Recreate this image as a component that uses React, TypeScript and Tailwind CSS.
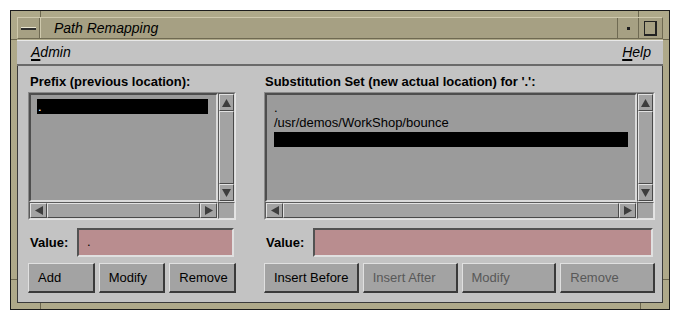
import React from 'react'

const raised = 'bg-[#a3a3a3] border border-t-[#e2e2e2] border-l-[#e2e2e2] border-b-[#4a4a4a] border-r-[#4a4a4a]'

function Arrow({ dir }: { dir: 'up' | 'down' | 'left' | 'right' }) {
  const pts = {
    up: '4.5,0 9,8 0,8',
    down: '0,0 9,0 4.5,8',
    left: '8,0 8,9 0,4.5',
    right: '0,0 8,4.5 0,9',
  }[dir]
  const vertical = dir === 'up' || dir === 'down'
  return (
    <svg width={vertical ? 9 : 8} height={vertical ? 8 : 9} viewBox={vertical ? '0 0 9 8' : '0 0 8 9'}>
      <polygon points={pts} fill="#3d3d3d" />
    </svg>
  )
}

function ArrowBtn({ dir }: { dir: 'up' | 'down' | 'left' | 'right' }) {
  const vertical = dir === 'up' || dir === 'down'
  return (
    <div className={`${raised} flex items-center justify-center shrink-0 ${vertical ? 'h-[17px]' : 'w-[17px]'}`}>
      <Arrow dir={dir} />
    </div>
  )
}

function VScroll() {
  return (
    <div className="flex flex-col bg-[#9b9b9b] border border-t-[#5a5a5a] border-l-[#5a5a5a] border-b-[#dcdcdc] border-r-[#dcdcdc]">
      <ArrowBtn dir="up" />
      <div className={`${raised} flex-1`} />
      <ArrowBtn dir="down" />
    </div>
  )
}

function HScroll() {
  return (
    <div className="flex bg-[#9b9b9b] border border-t-[#5a5a5a] border-l-[#5a5a5a] border-b-[#dcdcdc] border-r-[#dcdcdc]">
      <ArrowBtn dir="left" />
      <div className={`${raised} flex-1`} />
      <ArrowBtn dir="right" />
    </div>
  )
}

function ListBox({ children, pad }: { children: React.ReactNode; pad: string }) {
  return (
    <div className="h-[128px] grid grid-cols-[1fr_17px] grid-rows-[1fr_17px] border border-t-[#8a8a8a] border-l-[#8a8a8a] border-b-[#e4e4e4] border-r-[#e4e4e4]">
      <div className={`bg-[#9b9b9b] border-2 border-t-[#4e4e4e] border-l-[#4e4e4e] border-b-[#dadada] border-r-[#dadada] overflow-hidden text-[13px] leading-[15px] ${pad}`}>
        {children}
      </div>
      <VScroll />
      <HScroll />
      <div className="bg-[#a3a3a3] border border-t-[#5a5a5a] border-l-[#5a5a5a] border-b-[#e2e2e2] border-r-[#e2e2e2]" />
    </div>
  )
}

function ValueRow({ value }: { value: string }) {
  return (
    <div className="mt-[8px] h-[29px] flex items-center pr-[2px]">
      <span className="w-[49px] pl-[2px] text-[13px] font-bold">Value:</span>
      <div className="flex-1 h-full bg-[#b98d8f] border-2 border-t-[#525252] border-l-[#525252] border-b-[#e0e0e0] border-r-[#e0e0e0] pl-[8px] text-[13px] leading-[24px]">
        {value}
      </div>
    </div>
  )
}

function Btn({ label, disabled }: { label: string; disabled?: boolean }) {
  return (
    <div className={`flex-1 h-full flex items-center pl-[9px] pt-[1px] text-[13px] bg-[#a3a3a3] border border-t-[#e0e0e0] border-l-[#e0e0e0] border-b-2 border-r-2 border-b-[#3a3a3a] border-r-[#3a3a3a] ${disabled ? 'text-[#585858]' : 'text-black'}`}>
      {label}
    </div>
  )
}

export default function App() {
  return (
    <div className="w-[680px] h-[319px] bg-white pt-[10px] pl-[10px] font-['Liberation_Sans',Arial,sans-serif] text-black">
      <div className="relative w-[660px] h-[300px] border border-[#1c1c1c] bg-[#bbb495] bg-[radial-gradient(circle,#a19b7c_0.6px,transparent_0.8px)] bg-[length:2px_2px] p-[6px] flex flex-col">
        {/* frame notches */}
        <span className="absolute top-0 left-[29px] w-[1px] h-[6px] bg-[#6d684f]" />
        <span className="absolute top-0 left-[627px] w-[1px] h-[6px] bg-[#6d684f]" />
        <span className="absolute bottom-0 left-[29px] w-[1px] h-[6px] bg-[#6d684f]" />
        <span className="absolute bottom-0 left-[629px] w-[1px] h-[6px] bg-[#6d684f]" />
        <span className="absolute left-0 top-[28px] w-[6px] h-[1px] bg-[#6d684f]" />
        <span className="absolute left-0 top-[268px] w-[6px] h-[1px] bg-[#6d684f]" />
        <span className="absolute right-0 top-[28px] w-[6px] h-[1px] bg-[#6d684f]" />
        <span className="absolute right-0 top-[268px] w-[6px] h-[1px] bg-[#6d684f]" />

        <div className="h-[22px] flex bg-[#a6a083] border border-t-[#cfc9ad] border-l-[#cfc9ad] border-b-[#6f6a52] border-r-[#6f6a52]">
          <div className="w-[22px] flex items-center justify-center border-r border-r-[#6f6a52]">
            <div className="w-[15px] h-[3px] bg-[#2e2e2e] border-t border-t-[#e8e4d0]" />
          </div>
          <div className="flex-1 flex items-center pl-[13px] text-[14px] italic border-l border-l-[#cfc9ad]">Path Remapping</div>
          <div className="w-[21px] flex items-center justify-center border-l border-l-[#6f6a52]">
            <div className="w-[3px] h-[3px] bg-[#1e1e1e]" />
          </div>
          <div className="w-[24px] flex items-center justify-center border-l border-l-[#6f6a52]">
            <div className="w-[13px] h-[15px] border border-[#222] border-r-2 border-b-2" />
          </div>
        </div>

        <div className="mt-[1px] h-[26px] flex items-center justify-between bg-[#c3c3c3] border-t border-t-[#e8e8e8] border-b-2 border-b-[#6a6a6a] pl-[14px] pr-[12px] text-[14px] italic">
          <span>
            <span className="underline decoration-2 underline-offset-2">A</span>dmin
          </span>
          <span>
            <span className="underline decoration-2 underline-offset-2">H</span>elp
          </span>
        </div>

        <div className="flex-1 flex gap-[28px] bg-[#c3c3c3] border-x border-b border-[#3a3a3a] pl-[10px] pt-[8px]">
          <div className="w-[208px] flex flex-col">
            <div className="h-[15px] leading-[15px] text-[13px] font-bold mb-[3px] pl-[2px]">Prefix (previous location):</div>
            <ListBox pad="pt-[4px] pl-[6px] pr-[8px]">
              <div className="h-[15px] bg-black text-white pl-[1px]">.</div>
            </ListBox>
            <ValueRow value="." />
            <div className="mt-[6px] h-[30px] flex gap-[4px]">
              <Btn label="Add" />
              <Btn label="Modify" />
              <Btn label="Remove" />
            </div>
          </div>

          <div className="w-[391px] flex flex-col">
            <div className="h-[15px] leading-[15px] text-[13px] font-bold mb-[3px] pl-[1px]">
              Substitution Set (new actual location) for '.':
            </div>
            <ListBox pad="pt-[5px] pl-[7px] pr-[7px]">
              <div className="h-[15px]">.</div>
              <div className="h-[15px]">/usr/demos/WorkShop/bounce</div>
              <div className="mt-[2px] h-[15px] bg-black" />
            </ListBox>
            <ValueRow value="" />
            <div className="mt-[6px] h-[30px] flex gap-[4px]">
              <Btn label="Insert Before" />
              <Btn label="Insert After" disabled />
              <Btn label="Modify" disabled />
              <Btn label="Remove" disabled />
            </div>
          </div>
        </div>
      </div>
    </div>
  )
}
